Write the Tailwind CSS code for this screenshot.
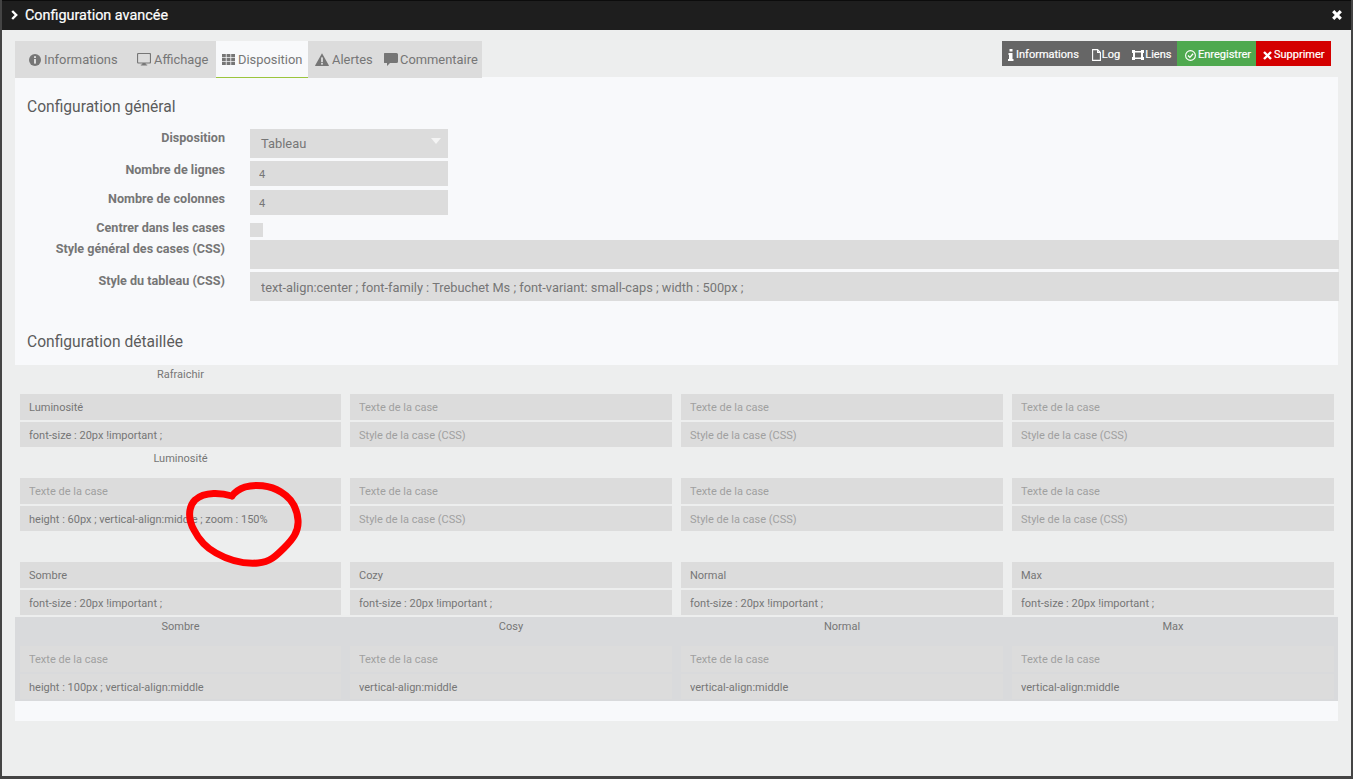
<!DOCTYPE html>
<html lang="fr">
  <head>
    <meta charset="UTF-8" />
    <meta name="viewport" content="width=device-width, initial-scale=1.0" />
    <title>Configuration avancée</title>
    <script src="https://cdn.jsdelivr.net/npm/@tailwindcss/browser@4"></script>
  </head>
  <body class="h-[779px] w-[1353px] overflow-hidden bg-[#444444] font-[Roboto,sans-serif]">
    <div class="relative mx-[2px] h-[776px] border-t border-[#0c0c0c] bg-[#edeeee]">
      <!-- Title bar -->
      <div class="flex h-[29px] items-center justify-between bg-[#1e1e1e] pb-[2px] pl-[9px] pr-[9px] text-white">
        <div class="flex items-center gap-[7px]">
          <svg width="7" height="10" viewBox="0 0 7 10"><path d="M1.2 1 L5.2 5 L1.2 9" fill="none" stroke="#fff" stroke-width="2.4"/></svg>
          <span class="pt-[3px] text-[14.4px] leading-none [-webkit-text-stroke:0.2px_#fff]">Configuration avancée</span>
        </div>
        <svg width="10" height="10" viewBox="0 0 10 10"><path d="M1.2 1.2 L8.8 8.8 M8.8 1.2 L1.2 8.8" fill="none" stroke="#fff" stroke-width="3.2"/></svg>
      </div>

      <div class="pl-[13px] pt-[11px]">
        <!-- Tabs and action buttons -->
        <div class="relative flex items-start justify-between pr-[20px]">
          <div class="flex h-[37px] bg-[#dcdcdc] text-[12.9px] text-[#767676]">
            <div class="flex w-[116px] items-center gap-[3px] pl-[14px]">
              <svg width="12" height="12" viewBox="0 0 12 12"><circle cx="6" cy="6" r="6" fill="#767676"/><rect x="5" y="2.2" width="2" height="1.8" fill="#dcdcdc"/><rect x="5" y="5" width="2" height="4.6" fill="#dcdcdc"/></svg>
              <span>Informations</span>
            </div>
            <div class="flex w-[85px] items-center gap-[3px] pl-[6px]">
              <svg width="14" height="13" viewBox="0 0 14 13"><path d="M1.5 0.5h11a1 1 0 0 1 1 1v7.5a1 1 0 0 1-1 1h-11a1 1 0 0 1-1-1v-7.5a1 1 0 0 1 1-1z" fill="none" stroke="#767676" stroke-width="1.2"/><path d="M5.5 10h3l.4 1.6h1.3v1h-6.400v-1h1.300z" fill="#767676"/></svg>
              <span>Affichage</span>
            </div>
            <div class="flex w-[92px] items-center gap-[3px] border-b border-[#9bc53d] bg-[#f8f9fb] pl-[6px] pt-[1px]">
              <svg width="13" height="11" viewBox="0 0 13 11" fill="#767676"><rect width="3.800" height="3.200"/><rect x="4.600" width="3.800" height="3.200"/><rect x="9.200" width="3.800" height="3.200"/><rect y="3.900" width="3.800" height="3.200"/><rect x="4.600" y="3.900" width="3.800" height="3.200"/><rect x="9.200" y="3.900" width="3.800" height="3.200"/><rect y="7.800" width="3.800" height="3.200"/><rect x="4.600" y="7.800" width="3.800" height="3.200"/><rect x="9.200" y="7.800" width="3.800" height="3.200"/></svg>
              <span>Disposition</span>
            </div>
            <div class="flex w-[70px] items-center gap-[3px] pl-[7px]">
              <svg width="14" height="13" viewBox="0 0 14 13"><path d="M7 0.300 L13.900 12.400 Q14 13 13.300 13 L0.700 13 Q0 13 0.100 12.400 Z" fill="#767676"/><rect x="6.100" y="4.400" width="1.800" height="4.600" fill="#dcdcdc"/><rect x="6.100" y="9.800" width="1.800" height="1.800" fill="#dcdcdc"/></svg>
              <span>Alertes</span>
            </div>
            <div class="flex w-[104px] items-center gap-[2px] pl-[6px]">
              <svg width="14" height="13" viewBox="0 0 14 13"><path d="M1.500 0h11a1.500 1.500 0 0 1 1.500 1.500v7a1.500 1.500 0 0 1-1.500 1.500h-6.500l-3 3v-3h-2a1.500 1.500 0 0 1-1.500-1.500v-7a1.500 1.500 0 0 1 1.500-1.500z" fill="#767676"/></svg>
              <span>Commentaire</span>
            </div>
          </div>

          <div class="flex h-[25px] text-[11px] text-white [-webkit-text-stroke:0.2px_#fff]">
            <div class="flex w-[175px] items-center bg-[#666666] pt-[3px]">
              <svg class="ml-[6px]" width="6" height="12" viewBox="0 0 6 12" fill="#fff"><rect x="1.500" width="3" height="2.500"/><path d="M0.500 4h4v6h1v2h-5.500v-2h1v-4h-0.500z"/></svg>
              <span class="ml-[2px]">Informations</span>
              <svg class="ml-[13px]" width="9" height="12" viewBox="0 0 9 12"><path d="M0.600 0.600h5l2.800 2.800v8h-7.800z M5.600 0.600v2.800h2.800" fill="none" stroke="#fff" stroke-width="1.100"/></svg>
              <span class="ml-[1px]">Log</span>
              <svg class="ml-[12px]" width="12" height="10" viewBox="0 0 12 10" fill="#fff"><path d="M0 0h3v1h6v-1h3v3h-1v4h1v3h-3v-1h-6v1h-3v-3h1v-4h-1z M3 2.500v5h6v-5z" fill-rule="evenodd"/></svg>
              <span class="ml-[1px]">Liens</span>
            </div>
            <div class="flex w-[79px] items-center bg-[#4fa94f] pl-[8px] pt-[3px]">
              <svg width="11" height="11" viewBox="0 0 11 11" fill="none" stroke="#fff"><circle cx="5.500" cy="5.500" r="4.900" stroke-width="1.100"/><path d="M3 5.500 L4.900 7.400 L8.100 3.800" stroke-width="1.300"/></svg>
              <span class="ml-[2px]">Enregistrer</span>
            </div>
            <div class="flex w-[75px] items-center bg-[#d40000] pl-[7px] pt-[3px]">
              <svg width="9" height="9" viewBox="0 0 9 9"><path d="M1 1 L8 8 M8 1 L1 8" fill="none" stroke="#fff" stroke-width="2.400"/></svg>
              <span class="ml-[2px]">Supprimer</span>
            </div>
          </div>
        </div>

        <!-- General configuration -->
        <div class="-mt-[1px] h-[288px] w-[1323px] bg-[#f8f9fb] text-[#767676]">
          <h2 class="h-[52px] pl-[12px] pt-[21px] text-[15.600px] font-normal leading-[18px] text-[#5c5c5c]">Configuration général</h2>
          <div class="flex h-[29px] gap-[25px]">
            <label class="w-[210px] flex-none pt-[1px] text-right text-[12.600px] font-bold leading-[15px]">Disposition</label>
            <div class="relative h-[29px] w-[198px] bg-[#dcdcdc] pl-[11px] text-[12.900px] leading-[29px]">
              Tableau
              <span class="absolute right-[7px] top-[9px] h-0 w-0 border-x-[5px] border-t-[6px] border-x-transparent border-t-[#f4f4f4]"></span>
            </div>
          </div>
          <div class="mt-[3px] flex h-[25px] gap-[25px]">
            <label class="w-[210px] flex-none pt-[1px] text-right text-[12.600px] font-bold leading-[15px]">Nombre de lignes</label>
            <input class="h-[25px] w-[198px] bg-[#dcdcdc] px-[9px] pt-[2px] text-[11px] text-[#767676] outline-none" value="4" />
          </div>
          <div class="mt-[4px] flex h-[25px] gap-[25px]">
            <label class="w-[210px] flex-none pt-[1px] text-right text-[12.600px] font-bold leading-[15px]">Nombre de colonnes</label>
            <input class="h-[25px] w-[198px] bg-[#dcdcdc] px-[9px] pt-[2px] text-[11px] text-[#767676] outline-none" value="4" />
          </div>
          <div class="mt-[8px] flex h-[14px] gap-[25px]">
            <label class="-mt-[3px] h-[15px] w-[210px] flex-none text-right text-[12.600px] font-bold leading-[15px]">Centrer dans les cases</label>
            <div class="h-[14px] w-[13px] bg-[#dcdcdc]"></div>
          </div>
          <div class="mt-[3px] flex h-[29px] gap-[25px]">
            <label class="w-[210px] flex-none pt-[1px] text-right text-[12.600px] font-bold leading-[15px]">Style général des cases (CSS)</label>
            <input class="relative h-[29px] w-[1089px] flex-none bg-[#dcdcdc] px-[11px] text-[13px] text-[#767676] outline-none" />
          </div>
          <div class="mt-[3px] flex h-[29px] gap-[25px]">
            <label class="w-[210px] flex-none pt-[1px] text-right text-[12.600px] font-bold leading-[15px]">Style du tableau (CSS)</label>
            <input class="relative h-[29px] w-[1089px] flex-none bg-[#dcdcdc] px-[11px] pt-[2px] text-[12.800px] text-[#767676] outline-none" value="text-align:center ; font-family : Trebuchet Ms ; font-variant: small-caps ; width : 500px ;" />
          </div>
          <h2 class="h-[64px] pl-[12px] pt-[32px] text-[15.600px] font-normal leading-[18px] text-[#5c5c5c]">Configuration détaillée</h2>
        </div>

        <!-- Detailed configuration -->
        <div class="w-[1323px] text-[11px] text-[#767676]">
          <div class="pl-[5px] pr-[4px]">
            <div class="grid h-[29px] grid-cols-[321px_322px_322px_322px] gap-x-[9px] text-center leading-[20px]">
              <div>Rafraichir</div><div></div><div></div><div></div>
            </div>
            <div class="grid grid-cols-[321px_322px_322px_322px] gap-x-[9px] gap-y-[2px]">
              <input class="h-[26px] w-full bg-[#dcdcdc] px-[9px] text-[#767676] outline-none placeholder:text-[#a0a0a0]" value="Luminosité" placeholder="Texte de la case" />
              <input class="h-[26px] w-full bg-[#dcdcdc] px-[9px] text-[#767676] outline-none placeholder:text-[#a0a0a0]" placeholder="Texte de la case" />
              <input class="h-[26px] w-full bg-[#dcdcdc] px-[9px] text-[#767676] outline-none placeholder:text-[#a0a0a0]" placeholder="Texte de la case" />
              <input class="h-[26px] w-full bg-[#dcdcdc] px-[9px] text-[#767676] outline-none placeholder:text-[#a0a0a0]" placeholder="Texte de la case" />
              <input class="h-[25px] w-full bg-[#dcdcdc] px-[9px] pt-[2px] text-[#767676] outline-none placeholder:text-[#a0a0a0]" value="font-size : 20px !important ;" placeholder="Style de la case (CSS)" />
              <input class="h-[25px] w-full bg-[#dcdcdc] px-[9px] pt-[2px] text-[#767676] outline-none placeholder:text-[#a0a0a0]" placeholder="Style de la case (CSS)" />
              <input class="h-[25px] w-full bg-[#dcdcdc] px-[9px] pt-[2px] text-[#767676] outline-none placeholder:text-[#a0a0a0]" placeholder="Style de la case (CSS)" />
              <input class="h-[25px] w-full bg-[#dcdcdc] px-[9px] pt-[2px] text-[#767676] outline-none placeholder:text-[#a0a0a0]" placeholder="Style de la case (CSS)" />
            </div>

            <div class="grid h-[31px] grid-cols-[321px_322px_322px_322px] gap-x-[9px] text-center leading-[24px]">
              <div>Luminosité</div><div></div><div></div><div></div>
            </div>
            <div class="grid grid-cols-[321px_322px_322px_322px] gap-x-[9px] gap-y-[2px]">
              <input class="h-[26px] w-full bg-[#dcdcdc] px-[9px] text-[#767676] outline-none placeholder:text-[#a0a0a0]" placeholder="Texte de la case" />
              <input class="h-[26px] w-full bg-[#dcdcdc] px-[9px] text-[#767676] outline-none placeholder:text-[#a0a0a0]" placeholder="Texte de la case" />
              <input class="h-[26px] w-full bg-[#dcdcdc] px-[9px] text-[#767676] outline-none placeholder:text-[#a0a0a0]" placeholder="Texte de la case" />
              <input class="h-[26px] w-full bg-[#dcdcdc] px-[9px] text-[#767676] outline-none placeholder:text-[#a0a0a0]" placeholder="Texte de la case" />
              <input class="h-[25px] w-full bg-[#dcdcdc] px-[9px] pt-[2px] text-[#767676] outline-none placeholder:text-[#a0a0a0]" value="height : 60px ; vertical-align:middle ; zoom : 150%" placeholder="Style de la case (CSS)" />
              <input class="h-[25px] w-full bg-[#dcdcdc] px-[9px] pt-[2px] text-[#767676] outline-none placeholder:text-[#a0a0a0]" placeholder="Style de la case (CSS)" />
              <input class="h-[25px] w-full bg-[#dcdcdc] px-[9px] pt-[2px] text-[#767676] outline-none placeholder:text-[#a0a0a0]" placeholder="Style de la case (CSS)" />
              <input class="h-[25px] w-full bg-[#dcdcdc] px-[9px] pt-[2px] text-[#767676] outline-none placeholder:text-[#a0a0a0]" placeholder="Style de la case (CSS)" />
            </div>

            <div class="h-[31px]"></div>
            <div class="grid grid-cols-[321px_322px_322px_322px] gap-x-[9px] gap-y-[2px]">
              <input class="h-[26px] w-full bg-[#dcdcdc] px-[9px] text-[#767676] outline-none" value="Sombre" />
              <input class="h-[26px] w-full bg-[#dcdcdc] px-[9px] text-[#767676] outline-none" value="Cozy" />
              <input class="h-[26px] w-full bg-[#dcdcdc] px-[9px] text-[#767676] outline-none" value="Normal" />
              <input class="h-[26px] w-full bg-[#dcdcdc] px-[9px] text-[#767676] outline-none" value="Max" />
              <input class="h-[25px] w-full bg-[#dcdcdc] px-[9px] pt-[2px] text-[#767676] outline-none" value="font-size : 20px !important ;" />
              <input class="h-[25px] w-full bg-[#dcdcdc] px-[9px] pt-[2px] text-[#767676] outline-none" value="font-size : 20px !important ;" />
              <input class="h-[25px] w-full bg-[#dcdcdc] px-[9px] pt-[2px] text-[#767676] outline-none" value="font-size : 20px !important ;" />
              <input class="h-[25px] w-full bg-[#dcdcdc] px-[9px] pt-[2px] text-[#767676] outline-none" value="font-size : 20px !important ;" />
            </div>
          </div>

          <div class="mt-[2px] bg-[#d9dadc] pb-[2px] pl-[5px] pr-[4px]">
            <div class="grid h-[29px] grid-cols-[321px_322px_322px_322px] gap-x-[9px] text-center leading-[20px]">
              <div>Sombre</div><div>Cosy</div><div>Normal</div><div>Max</div>
            </div>
            <div class="grid grid-cols-[321px_322px_322px_322px] gap-x-[9px] gap-y-[2px]">
              <input class="h-[26px] w-full bg-[#dcdcdc] px-[9px] text-[#767676] outline-none placeholder:text-[#a0a0a0]" placeholder="Texte de la case" />
              <input class="h-[26px] w-full bg-[#dcdcdc] px-[9px] text-[#767676] outline-none placeholder:text-[#a0a0a0]" placeholder="Texte de la case" />
              <input class="h-[26px] w-full bg-[#dcdcdc] px-[9px] text-[#767676] outline-none placeholder:text-[#a0a0a0]" placeholder="Texte de la case" />
              <input class="h-[26px] w-full bg-[#dcdcdc] px-[9px] text-[#767676] outline-none placeholder:text-[#a0a0a0]" placeholder="Texte de la case" />
              <input class="h-[25px] w-full bg-[#dcdcdc] px-[9px] pt-[2px] text-[#767676] outline-none" value="height : 100px ; vertical-align:middle" />
              <input class="h-[25px] w-full bg-[#dcdcdc] px-[9px] pt-[2px] text-[#767676] outline-none" value="vertical-align:middle" />
              <input class="h-[25px] w-full bg-[#dcdcdc] px-[9px] pt-[2px] text-[#767676] outline-none" value="vertical-align:middle" />
              <input class="h-[25px] w-full bg-[#dcdcdc] px-[9px] pt-[2px] text-[#767676] outline-none" value="vertical-align:middle" />
            </div>
          </div>
          <div class="h-[20px] bg-[#f8f9fb]"></div>
        </div>
      </div>

      <!-- Hand drawn annotation over the screenshot -->
      <svg class="pointer-events-none absolute left-[-2px] top-[-1px]" width="1353" height="779" fill="none">
        <path d="M232 496 C222 493 205 491 195 500 C188 507 188 520 194 530 C199 540 205 547 216 553 C230 561 245 564 258 563 C270 562 276 556 284 548 C292 540 299 532 298 520 C297 508 291 498 281 492 C270 485 255 484 245 487 C239 489 235 492 232 496" stroke="#ff0000" stroke-width="7" stroke-linejoin="round" stroke-linecap="round"/>
      </svg>
    </div>
  </body>
</html>
